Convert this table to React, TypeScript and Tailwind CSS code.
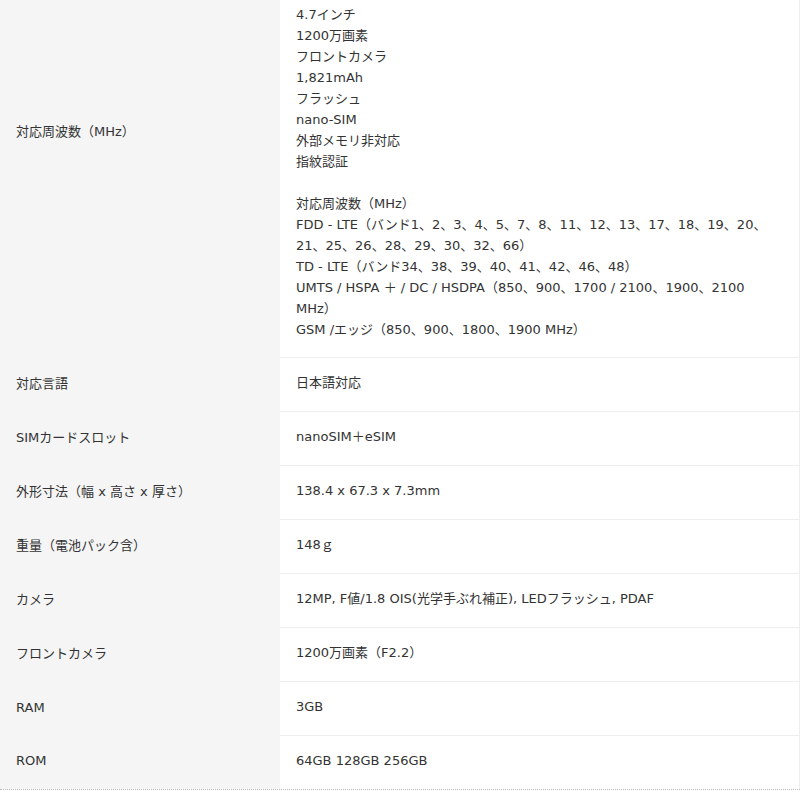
const SPEC_LINES = [
  "4.7インチ",
  "1200万画素",
  "フロントカメラ",
  "1,821mAh",
  "フラッシュ",
  "nano-SIM",
  "外部メモリ非対応",
  "指紋認証",
  "",
  "対応周波数（MHz）",
  "FDD - LTE（バンド1、2、3、4、5、7、8、11、12、13、17、18、19、20、",
  "21、25、26、28、29、30、32、66）",
  "TD - LTE（バンド34、38、39、40、41、42、46、48）",
  "UMTS / HSPA ＋ / DC / HSDPA（850、900、1700 / 2100、1900、2100",
  "MHz）",
  "GSM /エッジ（850、900、1800、1900 MHz）",
];

const ROWS = [
  { label: "対応言語", value: "日本語対応" },
  { label: "SIMカードスロット", value: "nanoSIM＋eSIM" },
  { label: "外形寸法（幅 x 高さ x 厚さ）", value: "138.4 x 67.3 x 7.3mm" },
  { label: "重量（電池パック含）", value: "148ｇ" },
  { label: "カメラ", value: "12MP, F値/1.8 OIS(光学手ぶれ補正), LEDフラッシュ, PDAF" },
  { label: "フロントカメラ", value: "1200万画素（F2.2）" },
  { label: "RAM", value: "3GB" },
  { label: "ROM", value: "64GB 128GB 256GB" },
];

export default function App() {
  return (
    <div
      className="h-[794px] w-full overflow-hidden bg-white text-[13px] leading-[21px] text-[#333]"
      style={{ fontFamily: '"DejaVu Sans", "Noto Sans CJK JP", sans-serif' }}
    >
      {/* page is scrolled a little: first row starts above the fold */}
      <div className="-mt-[96px] w-[800px] border-b border-dotted border-[#bbb]">
        <div className="grid grid-cols-[280px_520px]">
          <div className="flex items-center bg-[#f5f5f5] px-4">対応周波数（MHz）</div>
          <div className="border-b border-r border-[#eee] px-4 pt-4 pb-[17px]">
            <div className="h-[84px]" />
            {SPEC_LINES.map((line, i) => (
              <div key={i} className="h-[21px] whitespace-nowrap">
                {line}
              </div>
            ))}
          </div>
        </div>

        {ROWS.map(({ label, value }, idx) => (
          <div key={label} className="grid grid-cols-[280px_520px]">
            <div className="flex items-center bg-[#f5f5f5] px-4 pt-[14px] pb-[18px]">{label}</div>
            <div
              className={`border-r border-[#eee] px-4 pt-[14px] pb-[18px] whitespace-nowrap ${
                idx === ROWS.length - 1 ? "" : "border-b"
              }`}
            >
              {value}
            </div>
          </div>
        ))}
      </div>
    </div>
  );
}
